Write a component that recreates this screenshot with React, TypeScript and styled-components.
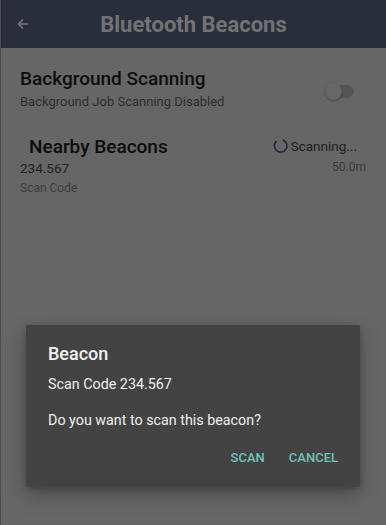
import React from "react";
import styled, { createGlobalStyle } from "styled-components";

const Global = createGlobalStyle`
  html, body { margin: 0; padding: 0; }
  body { font-family: Roboto, "Noto Sans", Arial, sans-serif; background: #666; }
`;

const Screen = styled.div`
  position: relative;
  width: 386px;
  height: 525px;
  background: #666666;
  border-left: 1px solid #4d4d4d;
  box-sizing: border-box;
  overflow: hidden;
`;

const Header = styled.header`
  height: 48px;
  background: #2a2d3c;
  display: flex;
  align-items: center;
  position: relative;
  padding-left: 15px;
`;

const Back = styled.div`
  width: 14px;
  height: 14px;
  color: #777;
  display: flex;
`;

const Title = styled.h1`
  position: absolute;
  left: 0;
  right: 0;
  margin: 0;
  text-align: center;
  font-size: 22px;
  font-weight: 700;
  color: #737373;
  pointer-events: none;
`;

const Content = styled.main`
  padding: 19px 20px 0 19px;
`;

const SettingRow = styled.section`
  display: flex;
  justify-content: space-between;
  align-items: center;
`;

const SettingText = styled.div`
  display: flex;
  flex-direction: column;
`;

const Heading = styled.h2<{ $indent?: number }>`
  margin: 0;
  padding-left: ${(p) => p.$indent ?? 0}px;
  font-size: 19px;
  font-weight: 500;
  color: #0d0d0d;
  line-height: 24px;
`;

const Sub = styled.div`
  font-size: 13px;
  color: #2e2e2e;
  line-height: 16px;
  margin-top: 3px;
`;

const Toggle = styled.div`
  position: relative;
  width: 30px;
  height: 18px;
  margin-right: 10px;
  margin-top: 4px;
`;

const Track = styled.div`
  position: absolute;
  left: 6px;
  top: 3px;
  width: 22px;
  height: 13px;
  border-radius: 7px;
  background: #555;
`;

const Thumb = styled.div`
  position: absolute;
  left: -1px;
  top: 1px;
  width: 17px;
  height: 17px;
  border-radius: 50%;
  background: #676767;
  box-shadow: 0 1px 2px rgba(0, 0, 0, 0.35);
`;

const BeaconsHeader = styled.div`
  display: flex;
  justify-content: space-between;
  align-items: center;
  margin-top: 25px;
`;

const Status = styled.div`
  display: flex;
  align-items: center;
  gap: 2px;
  font-size: 13.5px;
  color: #1f1f1f;
  margin-right: 9px;
  margin-top: -2px;
`;

const BeaconRow = styled.div`
  display: flex;
  justify-content: space-between;
  align-items: flex-start;
`;

const BeaconCode = styled.div`
  font-size: 13.5px;
  color: #222;
  line-height: 18px;
`;

const BeaconLabel = styled.div`
  font-size: 12px;
  color: #3c3c3c;
  line-height: 14px;
  margin-top: 4px;
`;

const Distance = styled.div`
  font-size: 12px;
  color: #3a3a3a;
  margin-top: 1px;
`;

const Dialog = styled.div`
  position: absolute;
  left: 25px;
  top: 325px;
  width: 334px;
  height: 162px;
  box-sizing: border-box;
  background: #434343;
  border-radius: 2px;
  box-shadow: 0 8px 20px rgba(0, 0, 0, 0.25), 0 2px 6px rgba(0, 0, 0, 0.2);
  padding: 17px 22px 0 22px;
  display: flex;
  flex-direction: column;
  color: #f2f2f2;
`;

const DialogTitle = styled.div`
  font-size: 18px;
  font-weight: 500;
  line-height: 24px;
`;

const DialogText = styled.div<{ $gap: number }>`
  font-size: 14.3px;
  line-height: 20px;
  margin-top: ${(p) => p.$gap}px;
  color: #efefef;
`;

const Actions = styled.div`
  display: flex;
  justify-content: flex-end;
  gap: 24px;
  margin-top: 20px;
`;

const ActionButton = styled.button`
  background: none;
  border: none;
  padding: 0;
  font-family: inherit;
  font-size: 13px;
  font-weight: 500;
  color: #6cc3bb;
  cursor: pointer;
`;

const Spinner = () => (
  <svg width="16" height="16" viewBox="0 0 16 16">
    <path
      d="M10.5 2.2 A6.3 6.3 0 1 1 3 3.6"
      fill="none"
      stroke="#1f2740"
      strokeWidth="1.6"
      strokeLinecap="round"
    />
  </svg>
);

export default function App() {
  return (
    <>
      <Global />
      <Screen>
        <Header>
          <Back>
            <svg width="14" height="14" viewBox="0 0 14 14">
              <path d="M12 7H2.5M7 2.5 2.5 7 7 11.5" fill="none" stroke="#777" strokeWidth="1.6" />
            </svg>
          </Back>
          <Title>Bluetooth Beacons</Title>
        </Header>
        <Content>
          <SettingRow>
            <SettingText>
              <Heading>Background Scanning</Heading>
              <Sub>Background Job Scanning Disabled</Sub>
            </SettingText>
            <Toggle>
              <Track />
              <Thumb />
            </Toggle>
          </SettingRow>
          <BeaconsHeader>
            <Heading $indent={9}>Nearby Beacons</Heading>
            <Status>
              <Spinner />
              Scanning...
            </Status>
          </BeaconsHeader>
          <BeaconRow>
            <div>
              <BeaconCode>234.567</BeaconCode>
              <BeaconLabel>Scan Code</BeaconLabel>
            </div>
            <Distance>50.0m</Distance>
          </BeaconRow>
        </Content>
        <Dialog>
          <DialogTitle>Beacon</DialogTitle>
          <DialogText $gap={8}>Scan Code 234.567</DialogText>
          <DialogText $gap={16}>Do you want to scan this beacon?</DialogText>
          <Actions>
            <ActionButton>SCAN</ActionButton>
            <ActionButton>CANCEL</ActionButton>
          </Actions>
        </Dialog>
      </Screen>
    </>
  );
}
